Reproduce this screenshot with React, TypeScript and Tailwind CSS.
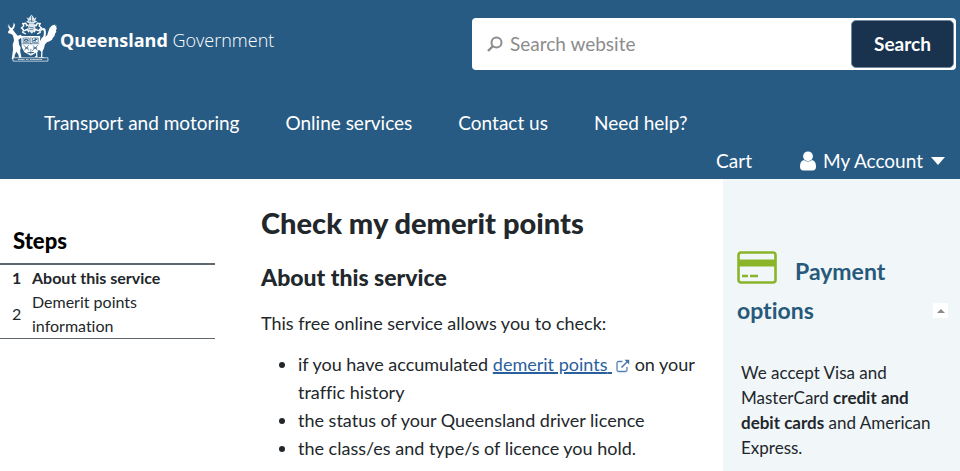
const navLinks = [
  "Transport and motoring",
  "Online services",
  "Contact us",
  "Need help?",
];

function Crest() {
  return (
    <svg
      viewBox="20 27 152 142"
      className="w-[51px] h-12 shrink-0"
      fill="#fff"
      aria-hidden="true"
    >
      {/* stag */}
      <path d="M21 58l6 7 1-9 4 10 6 2 4-8 1-8 4 7-3 10-4 4 7 9 8 9 10-3 3 8-11 7 2 14 5 10-2 10 3 13 1 9h-7l-2-11-6-9-5 10-1 12h-8l2-14 2-15-1-14 4-13-3-14-5-5-9-2-1-5 5-6-4-7z" />
      {/* brolga */}
      <path d="M121 108l5-9 6-7 1-12-2-6-5 2-5 4 1-5 5-5 7-2 4 5 1 9-1 12 5-5 3-10 4-11 7-7 10-3-1 4 5-1-2 5 3 2-3 6 1 5-4 6-1 6-5 6-3 6-7 5-8 3-6 6-3 12-4 8-1 18h6v3h-16v-3h6l1-16-7-6-5 8 1 14h-7v-3h3l-1-13 6-12z" />
      {/* mantling */}
      <path
        d="M79 86l-9-5 2-8-6-5 7-6-3-7 9-1 3 7 5-2M113 86l9-5-2-8 6-5-7-6 3-7-9-1-3 7-5-2M74 77l10-5 4 9M118 77l-10-5-4 9"
        fill="none"
        stroke="#fff"
        strokeWidth="4"
      />
      {/* helmet and crest */}
      <path d="M86 62l4-7h13l5 7-2 14-9 9-10-9z" opacity=".85" />
      <path d="M81 36l7 4 3-6 5-5 5 5 3 6 7-4-4 10 6 3-10 6H89l-9-6 6-3z" opacity=".85" />
      <path
        d="M89 66l14 2M90 73l11-1M96 32v18M88 47l15 1"
        stroke="#285b83"
        strokeWidth="2"
      />
      {/* shield */}
      <path d="M65 92h57l-2 33-7 15-19 11-20-11-7-15z" />
      <path
        d="M68 115h51M94 95v52M71 98h18v13H71zM99 98h17v13H99zM72 119l17 16M88 119l-15 17M99 119l16 17M115 119l-17 18"
        fill="none"
        stroke="#285b83"
        strokeWidth="2"
      />
      <path
        d="M74 105q6-7 12 0-6 5-12 0M101 107l12-6M107 99v10M77 128h10M101 128h12M84 142l19-1"
        fill="none"
        stroke="#285b83"
        strokeWidth="3"
      />
      <circle cx="94" cy="124" r="7" />
      {/* motto scroll */}
      <path d="M41 157h104v10H41z" fill="#285b83" stroke="#fff" strokeWidth="2" />
      <path
        d="M56 162h20M80 162h8M92 162h35"
        stroke="#d5e0e9"
        strokeWidth="3"
        strokeDasharray="3 1"
      />
    </svg>
  );
}

function SearchIcon() {
  return (
    <svg
      viewBox="0 0 16 16"
      className="size-4 shrink-0"
      fill="none"
      stroke="#8c8c8c"
      strokeWidth="2"
      aria-hidden="true"
    >
      <circle cx="9.5" cy="6.5" r="5" />
      <path d="M6 10l-5 5" strokeWidth="2.4" />
    </svg>
  );
}

function UserIcon() {
  return (
    <svg
      viewBox="0 0 16 20"
      className="w-4 h-5 mr-[7px]"
      fill="#fff"
      aria-hidden="true"
    >
      <circle cx="8" cy="5.3" r="4.9" />
      <path d="M4 9q4 3.200 8 0 4 .8 4 6.500 0 4-3.500 4h-9q-3.500 0-3.500-4Q0 9.800 4 9z" />
    </svg>
  );
}

function ExternalIcon() {
  return (
    <svg
      viewBox="0 0 14 14"
      className="inline-block size-[14px] ml-1 align-[-2px]"
      fill="none"
      stroke="#5683b5"
      strokeWidth="1.3"
      aria-hidden="true"
    >
      <path d="M6.5 2.5h-4q-1.5 0-1.5 1.5v7q0 1.5 1.5 1.5h7q1.5 0 1.5-1.5v-3" />
      <path d="M5.5 8.5l6-6" strokeWidth="1.7" />
      <path d="M8.5.8h4.7v4.7z" fill="#41719f" stroke="none" />
    </svg>
  );
}

function CardIcon() {
  return (
    <svg
      viewBox="0 0 40 33"
      className="inline-block w-10 h-[33px] mr-[18px] align-[-4px]"
      fill="none"
      stroke="#8ab52b"
      aria-hidden="true"
    >
      <rect x="1.5" y="1.5" width="37" height="30" rx="2.5" strokeWidth="2.6" />
      <path d="M1 12h38" strokeWidth="7" />
      <path d="M5 25h6M13 25h8" strokeWidth="2.4" />
    </svg>
  );
}

function Header() {
  return (
    <header className="bg-[#285b83] text-white">
      <div className="flex justify-between items-start pl-[6px] pr-1 pt-[14px]">
        <a href="#" className="flex items-start gap-[3px]">
          <Crest />
          <span className="pt-3 font-['Open_Sans',sans-serif] text-[18px] leading-7 whitespace-nowrap">
            <b>Queensland</b> <span className="font-light">Government</span>
          </span>
        </a>
        <form className="flex items-center w-[484px] mt-1 h-[52px] pl-[15px] pr-[2px] gap-[7px] bg-white rounded-[4px]">
          <SearchIcon />
          <input
            type="search"
            aria-label="Search website"
            placeholder="Search website"
            className="grow min-w-0 text-[19px] text-gray-900 placeholder:text-[#8c8c8c] outline-none"
          />
          <button
            type="button"
            className="w-[103px] h-12 shrink-0 rounded-[5px] border border-[#7489a0] bg-[#19334f] text-[19px] font-bold"
          >
            Search
          </button>
        </form>
      </div>

      <nav className="flex gap-[46px] pl-11 pt-[39px] text-[19px] leading-7">
        {navLinks.map((link) => (
          <a key={link} href="#">
            {link}
          </a>
        ))}
      </nav>

      <div className="flex justify-end gap-12 pr-[15px] pt-[10px] pb-1 text-[19px] leading-7">
        <a href="#">Cart</a>
        <a href="#" className="flex items-center">
          <UserIcon />
          My Account
          <svg viewBox="0 0 14 8" className="w-[14px] h-2 ml-2" fill="#fff">
            <path d="M0 0h14L7 8z" />
          </svg>
        </a>
      </div>
    </header>
  );
}

function Steps() {
  return (
    <aside className="w-[215px] shrink-0 pt-12">
      <h2 className="pl-[13px] text-[22px] leading-7 font-black text-black">
        Steps
      </h2>
      <ol className="mt-2 border-t-2 border-b border-[#5f666e] pt-[1px] text-[16px] leading-6">
        <li className="flex items-center gap-3 pl-3 font-bold">
          <span className="w-2">1</span>
          <span>About this service</span>
        </li>
        <li className="flex items-center gap-3 pl-3">
          <span className="w-2">2</span>
          <span className="w-[130px]">Demerit points information</span>
        </li>
      </ol>
    </aside>
  );
}

export default function App() {
  return (
    <div className="min-h-screen flex flex-col bg-white font-[Lato,sans-serif] text-[#22272b] [font-variant-ligatures:none]">
      <Header />

      <div className="grow flex">
        <Steps />

        <main className="grow min-w-0 pl-[46px] pr-4 pt-6 text-[18px] leading-7">
          <h1 className="text-[29px] leading-10 font-black">
            Check my demerit points
          </h1>
          <h2 className="mt-[18px] text-[23px] leading-8 font-black">
            About this service
          </h2>
          <p className="mt-4">This free online service allows you to check:</p>
          <ul className="mt-[13px] pl-[37px] list-disc">
            <li>
              if you have accumulated{" "}
              <a href="#" className="text-[#2a5f9e] underline decoration-2">
                demerit points{" "}
              </a>
              <ExternalIcon /> on your traffic history
            </li>
            <li>the status of your Queensland driver licence</li>
            <li>the class/es and type/s of licence you hold.</li>
          </ul>
        </main>

        <aside className="w-[237px] shrink-0 bg-[#f1f6f9] pl-[14px] pt-[72px] text-[17px] leading-[25px]">
          <div className="flex items-end justify-between pr-3">
            <h2 className="text-[23px] leading-[39px] font-bold text-[#27597b]">
              <CardIcon />
              Payment options
            </h2>
            <button
              type="button"
              aria-label="Collapse payment options"
              className="flex items-center justify-center size-[15px] mb-3 shrink-0 bg-white"
            >
              <svg viewBox="0 0 8 4" className="w-2 h-1" fill="#8b8b8b">
                <path d="M0 4l4-4 4 4z" />
              </svg>
            </button>
          </div>
          <p className="mt-[30px] pl-1 pr-7">
            We accept Visa and MasterCard <b>credit and debit cards</b> and
            American Express.
          </p>
        </aside>
      </div>
    </div>
  );
}
